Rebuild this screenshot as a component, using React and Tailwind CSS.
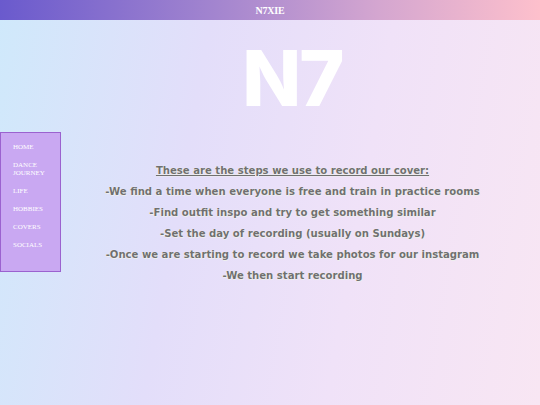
import React from "react";

const steps = [
  "-We find a time when everyone is free and train in practice rooms",
  "-Find outfit inspo and try to get something similar",
  "-Set the day of recording (usually on Sundays)",
  "-Once we are starting to record we take photos for our instagram",
  "-We then start recording",
];

const links = ["HOME", "DANCE JOURNEY", "LIFE", "HOBBIES", "COVERS", "SOCIALS"];

const App = () => {
  return (
    <div className="relative w-[540px] h-[405px] overflow-hidden bg-[linear-gradient(100deg,#cfe9fb_0%,#e3defa_35%,#f0e2f8_65%,#f8e6f3_100%)]">
      {/* Header */}
      <div className="h-[20px] flex items-center justify-center bg-[linear-gradient(90deg,#6a5acd_0%,#a385cf_40%,#d4a6d0_70%,#fdc0cc_100%)]">
        <span className="text-white text-[10px] font-bold font-['Liberation_Serif',serif] tracking-tight">
          N7XIE
        </span>
      </div>

      {/* Content */}
      <div className="pl-[45px]">
        <div className="flex justify-center pt-[16px]">
          <h1 className="text-white text-[77px] leading-[84px] font-extrabold font-['Inter',sans-serif] tracking-tight">
            N7
          </h1>
        </div>

        <div className="flex flex-col items-center mt-[43px] gap-[5px] font-['DejaVu_Sans',sans-serif] font-bold text-[10.1px] text-[#707070] [text-shadow:0_0_1px_#fff,0.5px_0.5px_0_#eee,-0.5px_-0.5px_0_#eee]">
          <p className="underline leading-[16px]">These are the steps we use to record our cover:</p>
          {steps.map((s) => (
            <p key={s} className="leading-[16px]">
              {s}
            </p>
          ))}
        </div>
      </div>

      {/* Sidebar */}
      <nav className="absolute left-0 top-[132px] w-[61px] h-[140px] bg-[#c9a8f2] border border-[#9b62cf] pl-[12px] pt-[10px] flex flex-col gap-[10px]">
        {links.map((l) => (
          <a
            key={l}
            className="text-white text-[7px] leading-[8px] font-['Liberation_Serif',serif] w-[36px]"
          >
            {l}
          </a>
        ))}
      </nav>
    </div>
  );
};

export default App;
